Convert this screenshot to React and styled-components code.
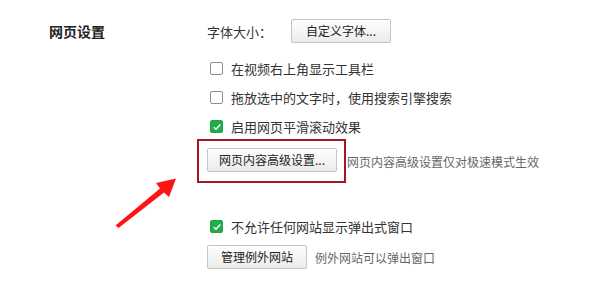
import React from "react";
import styled, { createGlobalStyle } from "styled-components";

const GlobalStyle = createGlobalStyle`
  html, body {
    margin: 0;
    padding: 0;
    background: #ffffff;
  }
  body {
    font-family: "Noto Sans CJK SC", "Noto Sans", sans-serif;
    color: #333;
  }
`;

const Page = styled.div`
  position: relative;
  width: 600px;
  height: 282px;
  overflow: hidden;
  display: flex;
  padding: 19px 0 0 49px;
  box-sizing: border-box;
`;

const SectionTitle = styled.div`
  width: 158px;
  height: 24px;
  display: flex;
  align-items: center;
  font-size: 14px;
  font-weight: bold;
  color: #222;
`;

const Options = styled.div`
  display: flex;
  flex-direction: column;
`;

const Row = styled.div`
  display: flex;
  align-items: center;
  height: ${(p) => p.$h || 24}px;
  margin-top: ${(p) => p.$mt || 0}px;
  font-size: 13px;
`;

const Label = styled.span`
  width: 84px;
  color: #333;
`;

const Button = styled.button`
  height: 24px;
  padding: 0 ${(p) => p.$px || 14}px;
  border: 1px solid #c4c4c4;
  border-radius: 2px;
  background: linear-gradient(#fefefe, #ebebeb);
  font-family: inherit;
  font-size: 12px;
  color: #222;
  line-height: 22px;
  cursor: pointer;
`;

const Box = styled.span`
  width: 13px;
  height: 13px;
  box-sizing: border-box;
  margin-left: 3px;
  margin-right: 8px;
  border-radius: 2px;
  border: 1px solid ${(p) => (p.$checked ? "#1ea646" : "#8f8f8f")};
  background: ${(p) => (p.$checked ? "#21ad4b" : "#fff")};
  display: flex;
  align-items: center;
  justify-content: center;
`;

const Note = styled.span`
  margin-left: ${(p) => p.$ml || 8}px;
  font-size: 12px;
  color: #666;
`;

const Highlight = styled.div`
  border: 2px solid #a6161c;
  padding: 7px 7px 9px 8px;
  margin-left: -10px;
`;

const Arrow = styled.svg`
  position: absolute;
  left: 0;
  top: 0;
  pointer-events: none;
`;

const Check = ({ checked }) => (
  <Box $checked={checked}>
    {checked && (
      <svg width="10" height="10" viewBox="0 0 10 10">
        <path d="M1.8 5.2 L4 7.3 L8.3 2.6" fill="none" stroke="#fff" strokeWidth="1.5" />
      </svg>
    )}
  </Box>
);

const CheckRow = ({ checked, children, mt }) => (
  <Row $h={29} $mt={mt}>
    <Check checked={checked} />
    {children}
  </Row>
);

export default function App() {
  return (
    <>
      <GlobalStyle />
      <Page>
        <SectionTitle>网页设置</SectionTitle>
        <Options>
          <Row>
            <Label>字体大小：</Label>
            <Button $px={14}>自定义字体...</Button>
          </Row>
          <CheckRow mt={11}>在视频右上角显示工具栏</CheckRow>
          <CheckRow>拖放选中的文字时，使用搜索引擎搜索</CheckRow>
          <CheckRow checked>启用网页平滑滚动效果</CheckRow>
          <Row $h={44} $mt={-2}>
            <Highlight>
              <Button $px={11}>网页内容高级设置...</Button>
            </Highlight>
            <Note $ml={1}>网页内容高级设置仅对极速模式生效</Note>
          </Row>
          <CheckRow checked mt={29}>不允许任何网站显示弹出式窗口</CheckRow>
          <Row $mt={4}>
            <Button $px={13}>管理例外网站</Button>
            <Note $ml={8}>例外网站可以弹出窗口</Note>
          </Row>
        </Options>
        <Arrow width="600" height="282" viewBox="0 0 600 282">
          <polygon
            points="115.5,225.5 160,188.5 156,183 176,178.5 169,197 164,192.5 118.5,228"
            fill="#ff1414"
          />
        </Arrow>
      </Page>
    </>
  );
}
